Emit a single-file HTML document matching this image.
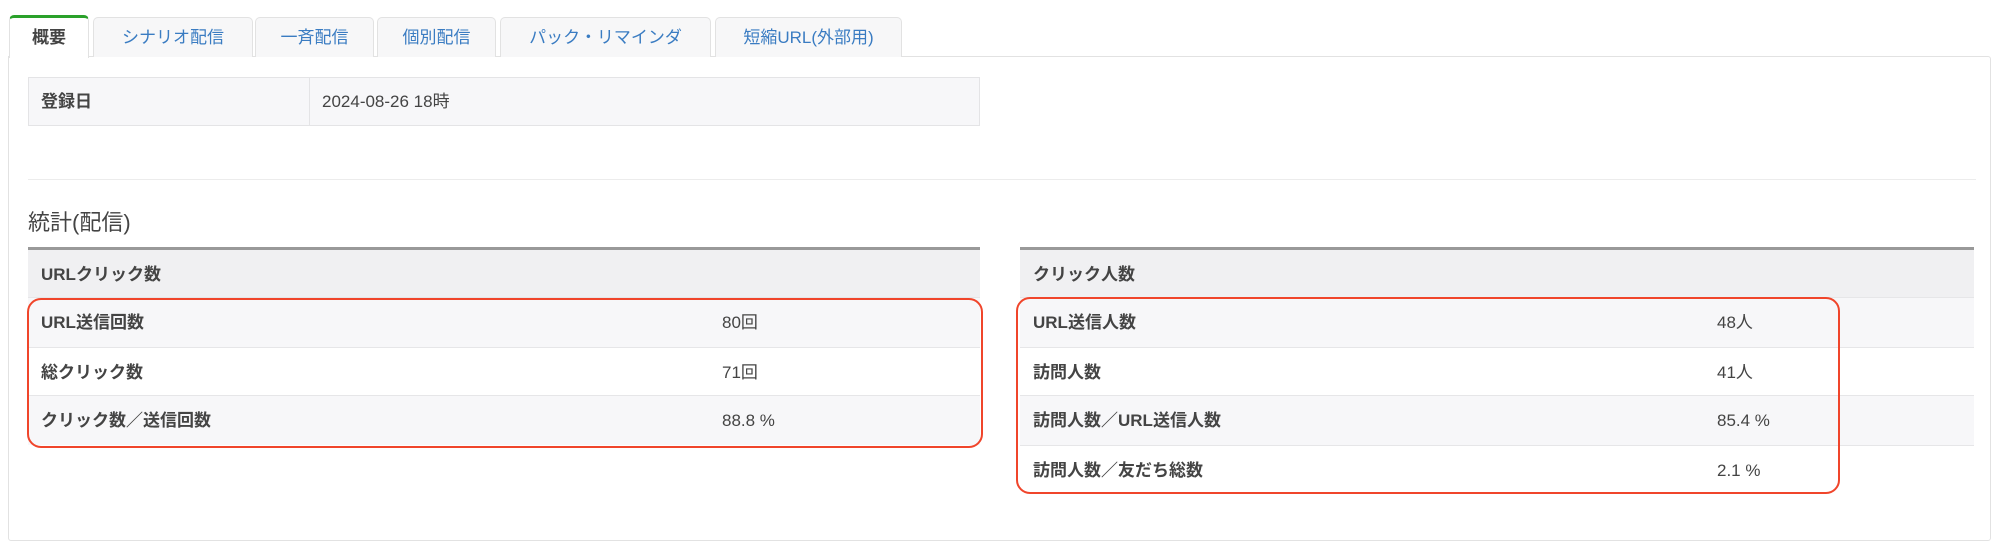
<!DOCTYPE html>
<html><head><meta charset="utf-8"><style>
*{box-sizing:border-box;margin:0;padding:0}
body{width:1999px;height:559px;background:#fff;font-family:"Liberation Sans","Noto Sans CJK JP",sans-serif;color:#444;font-size:17px;position:relative;overflow:hidden}
.a{position:absolute}
.tab{position:absolute;top:17px;height:40px;border:1px solid #e2e2e2;border-bottom:none;border-radius:5px 5px 0 0;background:#f7f7f8;color:#3a7cc2;text-align:center;line-height:40px;font-size:17px}
.tab.on{background:#fff;color:#444;font-weight:bold;border-top:3px solid #2aa12a;top:15px;height:43px;line-height:40px;z-index:2}
.panel{position:absolute;left:8px;top:56px;width:1983px;height:485px;border:1px solid #e2e2e2;border-radius:0 3px 3px 3px}
.row{position:absolute;height:50px;line-height:50px;border-top:1px solid #e6e6e8}
.row b{position:absolute;left:13px;color:#444}
.row span{position:absolute;color:#444}
.g{background:#f7f7f9}
.h{background:#f0f0f2;border-top:3px solid #999}
.red{position:absolute;border:2px solid #f0452b;border-radius:14px}
</style></head><body>
<div class="panel"></div>
<div class="tab on" style="left:9px;width:80px">概要</div>
<div class="tab" style="left:93px;width:160px">シナリオ配信</div>
<div class="tab" style="left:255px;width:119px">一斉配信</div>
<div class="tab" style="left:377px;width:119px">個別配信</div>
<div class="tab" style="left:500px;width:211px">パック・リマインダ</div>
<div class="tab" style="left:715px;width:187px">短縮URL(外部用)</div>

<div class="a" style="left:28px;top:77px;width:952px;height:49px;background:#f7f7f9;border:1px solid #e4e4e6"></div>
<div class="a" style="left:309px;top:77px;width:1px;height:49px;background:#e4e4e6"></div>
<div class="a" style="left:41px;top:77px;line-height:49px;font-weight:bold">登録日</div>
<div class="a" style="left:322px;top:77px;line-height:49px">2024-08-26 18時</div>

<div class="a" style="left:28px;top:179px;width:1948px;height:1px;background:#ececec"></div>
<div class="a" style="left:28px;top:205px;font-size:22px;color:#444">統計(配信)</div>

<div class="row h" style="left:28px;top:247px;width:952px"><b>URLクリック数</b></div>
<div class="row g" style="left:28px;top:297px;width:952px"><b>URL送信回数</b><span style="left:694px">80回</span></div>
<div class="row" style="left:28px;top:347px;width:952px"><b>総クリック数</b><span style="left:694px">71回</span></div>
<div class="row g" style="left:28px;top:395px;width:952px"><b>クリック数／送信回数</b><span style="left:694px">88.8 %</span></div>
<div class="red" style="left:27px;top:298px;width:956px;height:150px"></div>

<div class="row h" style="left:1020px;top:247px;width:954px"><b>クリック人数</b></div>
<div class="row g" style="left:1020px;top:297px;width:954px"><b>URL送信人数</b><span style="left:697px">48人</span></div>
<div class="row" style="left:1020px;top:347px;width:954px"><b>訪問人数</b><span style="left:697px">41人</span></div>
<div class="row g" style="left:1020px;top:395px;width:954px"><b>訪問人数／URL送信人数</b><span style="left:697px">85.4 %</span></div>
<div class="row" style="left:1020px;top:445px;width:954px"><b>訪問人数／友だち総数</b><span style="left:697px">2.1 %</span></div>
<div class="red" style="left:1016px;top:297px;width:824px;height:197px"></div>
</body></html>
